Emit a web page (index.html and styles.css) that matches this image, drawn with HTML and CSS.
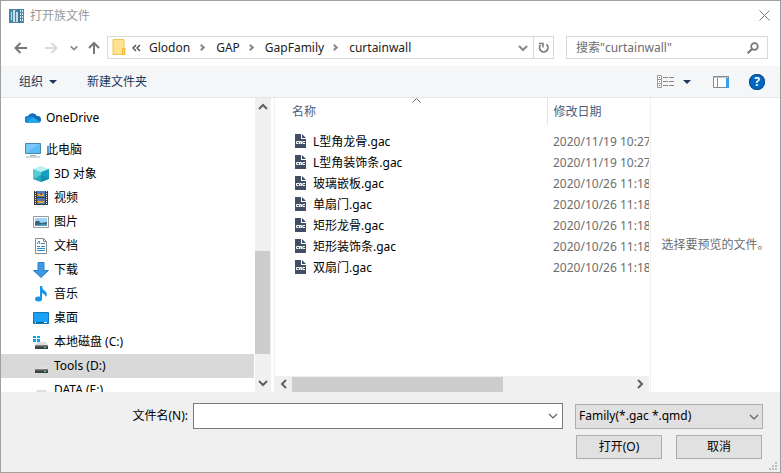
FILE: index.html
```html
<!DOCTYPE html>
<html lang="zh-CN">
<head>
    <meta charset="UTF-8" />
    <title>打开族文件</title>
    <meta name="viewport" content="width=device-width, initial-scale=1" />
    <link rel="stylesheet" href="styles.css">
</head>
<body>
    <!-- shared icons -->
    <svg class="sprite" aria-hidden="true">
        <symbol id="chev-down" viewBox="0 0 10 10"><path d="M1 3l4 4 4-4" fill="none" stroke="currentColor" stroke-width="2"/></symbol>
        <symbol id="chev-thin" viewBox="0 0 10 10"><path d="M1 3l4 4 4-4" fill="none" stroke="currentColor" stroke-width="1.2"/></symbol>
        <symbol id="drive" viewBox="0 0 16 16"><path d="M4 8h9l2 4H2z" fill="#dcdde1"/><path d="M2 11.500h13V15H2z" fill="#3d4043"/><path d="M2 11.500h13v1H2z" fill="#77797c"/><path d="M11 13h2v1h-2z" fill="#4be052"/></symbol>
        <symbol id="gac" viewBox="0 0 11 14">
            <path d="M0 0h6v5h5v9H0z" fill="#414e66"/>
            <path d="M7 0l4 4H7z" fill="#414e66"/>
            <path d="M4 7.500H1.500v2H3.500M4.500 10V7.500h2V10M4.500 9h2M10 7.500H7.800v2H10" fill="none" stroke="#fff" stroke-width="1"/>
        </symbol>
    </svg>

    <div class="dialog">
        <header class="titlebar">
            <svg width="15" height="14" viewBox="0 0 15 14">
                <path d="M0 0h15v14H0z" fill="#4888ab"/>
                <path d="M2 3h1v8H2zM4 1h2v12H4zM7 3h2v10H7z" fill="#c5dce7"/>
                <path d="M11.500 1v12M13.500 1v12" stroke="#d9ebf3" stroke-width="1" stroke-dasharray="2 1"/>
                <path d="M10 0v14" stroke="#286789"/>
            </svg>
            <h1>打开族文件</h1>
            <button class="close" aria-label="关闭"><svg width="11" height="11" viewBox="0 0 11 11"><path d="M.5.5l10 10M10.500.5l-10 10" stroke="#777" stroke-width="1"/></svg></button>
        </header>

        <nav class="navbar">
            <div class="nav-buttons">
                <button aria-label="后退"><svg width="14" height="12" viewBox="0 0 14 12"><path d="M13 6H2M6.500 1l-5 5 5 5" fill="none" stroke="#777" stroke-width="2"/></svg></button>
                <button aria-label="前进"><svg width="14" height="12" viewBox="0 0 14 12"><path d="M1 6h11M7.500 1l5 5-5 5" fill="none" stroke="#dadada" stroke-width="2"/></svg></button>
                <button aria-label="最近位置"><svg class="small"><use href="#chev-down"/></svg></button>
                <button aria-label="上移"><svg width="12" height="13" viewBox="0 0 12 13"><path d="M6 13V2M1 7l5-5 5 5" fill="none" stroke="#777" stroke-width="2"/></svg></button>
            </div>
            <div class="address">
                <svg width="14" height="17" viewBox="0 0 14 17"><path d="M1 .5h11v9h1v6H1z" fill="#ffe391" stroke="#edc64f"/><path d="M10.500 9.500h2v6h-2z" fill="#ffe391" stroke="#e8b932"/></svg>
                <svg class="earlier" width="10" height="8" viewBox="0 0 10 8"><path d="M4 1L1 4l3 3M8 1L5 4l3 3" fill="none" stroke="#444" stroke-width="1.300"/></svg>
                <ol class="crumbs">
                    <li><a href="#">Glodon</a></li>
                    <li><a href="#">GAP</a></li>
                    <li><a href="#">GapFamily</a></li>
                    <li><a href="#">curtainwall</a></li>
                </ol>
                <button class="history" aria-label="历史记录"><svg class="icon"><use href="#chev-down"/></svg></button>
                <button class="refresh" aria-label="刷新"><svg width="12" height="12" viewBox="0 0 12 12"><path d="M8.500 2.500A4.200 4.200 0 1 1 2.500 3" fill="none" stroke="#777" stroke-width="1.700"/><path d="M1 1.500h4v4" fill="none" stroke="#777" stroke-width="1.500"/></svg></button>
            </div>
            <div class="search">
                <input type="text" aria-label="搜索" placeholder="搜索&quot;curtainwall&quot;">
                <svg width="12" height="12" viewBox="0 0 12 12"><circle cx="7.500" cy="4.500" r="3.300" fill="none" stroke="#777" stroke-width="1.700"/><path d="M5 7l-4.300 4.300" stroke="#777" stroke-width="2"/></svg>
            </div>
        </nav>

        <div class="toolbar">
            <button>组织 <i class="caret"></i></button>
            <button>新建文件夹</button>
            <div class="tools">
                <button aria-label="更改视图">
                    <svg width="17" height="13" viewBox="0 0 17 13">
                        <path d="M.5.5h4v12h-4zM.5 4.500h4M.5 8.500h4" fill="#fff" stroke="#999"/>
                        <path d="M2 2h1v1H2z" fill="#2f9e50"/><path d="M2 6h1v1H2z" fill="#1987ff"/><path d="M2 10h1v1H2z" fill="#e02020"/>
                        <path d="M6 2.500h11M6 6.500h11M6 10.500h11" stroke="#888" stroke-dasharray="5 1"/>
                    </svg>
                    <i class="caret"></i>
                </button>
                <button aria-label="预览窗格"><svg width="16" height="12" viewBox="0 0 16 12"><path d="M.5.5h15v11H.5z" fill="#fff" stroke="#858b91"/><path d="M0 1h16M4.500 2v9" stroke="#858b91"/><path d="M13 2h3v10h-3z" fill="#37a0e8"/></svg></button>
                <button aria-label="帮助"><span class="help">?</span></button>
            </div>
        </div>

        <main class="content">
            <aside class="sidebar">
                <ul class="tree">
                    <li class="root">
                        <svg viewBox="0 0 16 16"><path d="M3 13a3.500 3.500 0 0 1 0-7 5 5 0 0 1 9 0 3.500 3.500 0 0 1 1 7z" fill="#0f6cbd"/><path d="M2 12l6-5 7 5-2 1H3z" fill="#28a8ea"/><path d="M1 8q3-3 7-1l-6 5q-3-1-1-4z" fill="#1490df"/></svg>
                        OneDrive
                    </li>
                    <li class="root spaced">
                        <svg viewBox="0 0 16 16"><path d="M.5 1.500h15v10H.5z" fill="#5cbcf5" stroke="#4589ae"/><path d="M1 11L14 2H1z" fill="#8bd4ff" opacity=".6"/><path d="M5 13.500h6M1 15h14" stroke="#9daebc"/></svg>
                        此电脑
                    </li>
                    <li><svg viewBox="0 0 16 16"><path d="M0 3l8-3 8 3-8 3z" fill="#baf1f3"/><path d="M0 3l8 3v10l-8-3z" fill="#55cbd5"/><path d="M16 3L8 6v10l8-3z" fill="#16a0c4"/><path d="M0 13l8-4 8 4-8 3z" fill="#087f98" opacity=".5"/></svg>3D 对象</li>
                    <li><svg viewBox="0 0 16 16"><path d="M1 1h14v14H1z" fill="#3b3b3b"/><path d="M4 1h8v6H4zM4 8h8v6H4z" fill="#477dc5"/><path d="M5 5h6M5 12h6" stroke="#e2a92e" stroke-width="2"/><path d="M7 3h2v2H7zM8 9h2v2H8z" fill="#b9433f"/><path d="M2.500 1v14M13.500 1v14" stroke="#eee" stroke-dasharray="1 1"/></svg>视频</li>
                    <li><svg viewBox="0 0 16 16"><path d="M.5 2.500h15v11H.5z" fill="#fff" stroke="#999"/><path d="M2 4h12v8H2z" fill="#9cd4f5"/><path d="M2 8q3-3 6 1l6-1v4H2z" fill="#37677c"/><path d="M2 11l12-1v2H2z" fill="#559bbd"/></svg>图片</li>
                    <li><svg viewBox="0 0 16 16"><path d="M2.500.5h8l3 3v12h-11z" fill="#fff" stroke="#8b8b8b"/><path d="M10.500.5v3h3" fill="none" stroke="#8b8b8b"/><path d="M4 6l2-3 1 3M8 5.500h4M4 8.500h3M8 8.500h4M4 10.500h8M4 12.500h8" fill="none" stroke="#2f8dcb"/></svg>文档</li>
                    <li><svg viewBox="0 0 16 16"><path d="M5 .5h6v8h4.500L8 15.500.5 8.500H5z" fill="#3e98e4" stroke="#2980ca"/></svg>下载</li>
                    <li><svg viewBox="0 0 16 16"><ellipse cx="5.500" cy="13" rx="3.500" ry="2.500" fill="#1794ea"/><path d="M7 0h2q0 3 3 5 3 2 1 6-1-3-4-4v6H7z" fill="#1794ea"/></svg>音乐</li>
                    <li><svg viewBox="0 0 16 16"><path d="M.5 2.500h15v11H.5z" fill="#19a0f8" stroke="#1677b6"/><path d="M1 12.500h14" stroke="#075e99"/><path d="M2 12.500h1M11 12.500h3" stroke="#fff"/></svg>桌面</li>
                    <li><svg viewBox="0 0 16 16"><use href="#drive"/><path d="M0 2h3v2H0zM4 2h3v2H4zM0 5h3v3H0zM4 5h3v3H4z" fill="#00a9ef"/></svg>本地磁盘 (C:)</li>
                    <li class="selected"><svg><use href="#drive"/></svg>Tools (D:)</li>
                    <li><svg><use href="#drive"/></svg>DATA (E:)</li>
                </ul>
                <div class="scroll-y">
                    <svg class="icon up"><use href="#chev-down"/></svg>
                    <div class="track"><div class="thumb"></div></div>
                    <svg class="icon"><use href="#chev-down"/></svg>
                </div>
            </aside>

            <section class="files">
                <svg class="sort" width="9" height="5" viewBox="0 0 9 5"><path d="M.5 4.500l4-4 4 4" fill="none" stroke="#666"/></svg>
                <div class="list">
                    <table>
                        <thead>
                            <tr><th class="name">名称</th><th class="date">修改日期</th></tr>
                        </thead>
                        <tbody>
                            <tr><td><svg><use href="#gac"/></svg>L型角龙骨.gac</td><td>2020/11/19 10:27</td></tr>
                            <tr><td><svg><use href="#gac"/></svg>L型角装饰条.gac</td><td>2020/11/19 10:27</td></tr>
                            <tr><td><svg><use href="#gac"/></svg>玻璃嵌板.gac</td><td>2020/10/26 11:18</td></tr>
                            <tr><td><svg><use href="#gac"/></svg>单扇门.gac</td><td>2020/10/26 11:18</td></tr>
                            <tr><td><svg><use href="#gac"/></svg>矩形龙骨.gac</td><td>2020/10/26 11:18</td></tr>
                            <tr><td><svg><use href="#gac"/></svg>矩形装饰条.gac</td><td>2020/10/26 11:18</td></tr>
                            <tr><td><svg><use href="#gac"/></svg>双扇门.gac</td><td>2020/10/26 11:18</td></tr>
                        </tbody>
                    </table>
                </div>
                <div class="scroll-x">
                    <svg class="icon left"><use href="#chev-down"/></svg>
                    <div class="track"><div class="thumb"></div></div>
                    <svg class="icon right"><use href="#chev-down"/></svg>
                </div>
            </section>

            <section class="preview">选择要预览的文件。</section>
        </main>

        <footer class="footer">
            <div class="fields">
                <label for="filename">文件名(N):</label>
                <div class="combo">
                    <input type="text" id="filename">
                    <svg class="icon"><use href="#chev-thin"/></svg>
                </div>
                <div class="filter">
                    <select aria-label="文件类型"><option>Family(*.gac *.qmd)</option></select>
                    <svg class="icon"><use href="#chev-thin"/></svg>
                </div>
            </div>
            <div class="actions">
                <button>打开(O)</button>
                <button>取消</button>
            </div>
            <svg class="grip" width="8" height="8" viewBox="0 0 8 8"><path d="M6 0h2v2H6zM3 3h2v2H3zM6 3h2v2H6zM0 6h2v2H0zM3 6h2v2H3zM6 6h2v2H6z" fill="#bfbfbf"/></svg>
        </footer>
    </div>
</body>
</html>
```
FILE: styles.css
```css
* {
    box-sizing: border-box;
}
body {
    margin: 0;
    font-family: "Noto Sans", "Noto Sans CJK SC", sans-serif;
    font-size: 12px;
    line-height: 16px;
    color: #000;
}
button, input, select {
    font: inherit;
    color: inherit;
}
button {
    display: flex;
    align-items: center;
    justify-content: center;
    padding: 0;
    border: none;
    background: none;
}
svg {
    display: block;
    flex: none;
}
ul, ol {
    list-style: none;
    margin: 0;
    padding: 0;
}
.sprite {
    position: absolute;
    width: 0;
    height: 0;
}
.icon {
    width: 10px;
    height: 10px;
    color: #606060;
}
.small {
    width: 8px;
    height: 8px;
    color: #888;
}
.dialog {
    display: flex;
    flex-direction: column;
    height: 100vh;
    min-height: 360px;
    border: 1px solid #a0a0a0;
    background: #fff;
}

/* title bar */
.titlebar {
    display: flex;
    align-items: center;
    height: 29px;
    padding: 0 10px 0 8px;
    gap: 6px;
}
.titlebar h1 {
    margin: 0;
    font-size: 12px;
    font-weight: normal;
    color: #999;
}
.close {
    margin-left: auto;
}

/* navigation */
.navbar {
    display: flex;
    height: 36px;
    padding: 6px 12px 7px 13px;
}
.nav-buttons {
    display: flex;
    align-items: center;
    width: 93px;
}
.nav-buttons button {
    margin-right: 16px;
}
.nav-buttons button:nth-child(2) {
    margin-right: 12px;
}
.nav-buttons button:nth-child(3) {
    margin-right: 10px;
}
.nav-buttons button:last-child {
    margin-right: 0;
}
.address {
    display: flex;
    flex: 1;
    align-items: center;
    border: 1px solid #d9d9d9;
    padding-left: 4px;
}
.earlier {
    margin: 0 6px;
}
.crumbs {
    display: flex;
    flex: 1;
    padding-left: 1px;
}
.crumbs a {
    color: #222;
    text-decoration: none;
}
.crumbs li + li::before {
    content: "";
    display: inline-block;
    width: 3px;
    height: 3px;
    margin: 0 12px 2px 9px;
    border-top: 2px solid #888;
    border-right: 2px solid #888;
    box-sizing: content-box;
    transform: rotate(45deg);
}
.crumbs li + li {
    margin-right: -1px;
}
.history {
    width: 20px;
}
.history .icon {
    color: #888;
}
.refresh {
    align-self: stretch;
    width: 20px;
    border-left: 1px solid #d9d9d9;
}
.search {
    display: flex;
    align-items: center;
    width: 202px;
    margin-left: 12px;
    padding: 0 8px 0 9px;
    border: 1px solid #d9d9d9;
}
.search input {
    flex: 1;
    min-width: 0;
    padding: 0;
    border: none;
    outline: none;
}
.search input::placeholder {
    color: #6d6d6d;
}

/* command bar */
.toolbar {
    display: flex;
    align-items: center;
    height: 32px;
    padding: 0 15px 0 18px;
    gap: 30px;
    background: #f5f6f7;
    border-bottom: 1px solid #e4e7ea;
    color: #1e395b;
}
.caret {
    margin-left: 6px;
    border: 4px solid transparent;
    border-top-color: #1e395b;
    border-bottom: none;
}
.tools {
    display: flex;
    align-items: center;
    margin-left: auto;
    gap: 20px;
}
.tools .caret {
    margin: 0 2px 0 9px;
}
.help {
    width: 16px;
    height: 16px;
    border-radius: 50%;
    background: #0067c5;
    box-shadow: inset 0 0 0 1px #154c88;
    color: #fff;
    font-weight: bold;
}

/* main area */
.content {
    display: flex;
    flex: 1;
    min-height: 0;
}
.sidebar {
    display: flex;
    flex: none;
    width: 274px;
    padding-right: 3px;
    border-right: 1px solid #f0f0f0;
}
.tree {
    flex: 1;
    padding-top: 8px;
    margin-right: 1px;
    overflow: hidden;
}
.tree li {
    display: flex;
    align-items: center;
    height: 24px;
    padding-left: 32px;
    gap: 5px;
}
.tree li.root {
    padding-left: 24px;
}
.tree li.spaced {
    margin-top: 8px;
}
.tree li.selected {
    background: #d9d9d9;
}
.tree svg {
    width: 16px;
    height: 16px;
}
.scroll-y {
    display: flex;
    flex-direction: column;
    align-items: center;
    width: 16px;
    padding: 4px 0;
    background: #f0f0f0;
}
.scroll-y .track {
    display: flex;
    flex: 1;
    flex-direction: column;
    justify-content: flex-end;
    width: 100%;
    padding: 3px 1px 24px 0;
}
.scroll-y .thumb {
    height: 43%;
    background: #cdcdcd;
}
.up {
    transform: rotate(180deg);
}
.left {
    transform: rotate(90deg);
}
.right {
    transform: rotate(-90deg);
}
.files {
    position: relative;
    display: flex;
    flex: 1;
    flex-direction: column;
    min-width: 0;
    margin-right: 1px;
}
/* sits on the edge of the header row */
.sort {
    position: absolute;
    top: 0;
    left: 137px;
}
.list {
    flex: 1;
    min-height: 0;
    overflow: hidden;
}
table {
    width: 460px;
    table-layout: fixed;
    border-collapse: collapse;
}
th {
    height: 27px;
    padding: 0 0 0 6px;
    border-right: 1px solid #e5e5e5;
    color: #4c607a;
    font-weight: normal;
    text-align: left;
}
th.name {
    width: 272px;
    padding-left: 17px;
}
/* space between header and rows */
tbody::before {
    content: "";
    display: block;
    height: 6px;
}
td {
    height: 21px;
    padding: 0 0 0 6px;
    color: #6d6d6d;
    white-space: nowrap;
}
td:first-child {
    padding-left: 20px;
    color: #000;
}
td svg {
    display: inline-block;
    width: 11px;
    height: 14px;
    margin-right: 7px;
    vertical-align: -2px;
}
.scroll-x {
    display: flex;
    align-items: center;
    height: 16px;
    padding: 0 4px;
    background: #f0f0f0;
}
.scroll-x .track {
    flex: 1;
    height: 15px;
    padding: 0 3px;
}
.scroll-x .thumb {
    width: 62%;
    height: 100%;
    background: #cdcdcd;
}
.preview {
    display: flex;
    align-items: center;
    justify-content: center;
    width: 130px;
    border-left: 1px solid #f0f0f0;
    color: #6d6d6d;
}

/* file name and buttons */
.footer {
    position: relative;
    height: 80px;
    padding: 11px 17px 0 0;
    background: #f0f0f0;
}
.fields {
    display: flex;
    align-items: center;
}
.fields label {
    width: 192px;
    padding-right: 5px;
    text-align: right;
}
.combo {
    display: flex;
    flex: 1;
    align-items: center;
    height: 26px;
    padding-right: 4px;
    border: 1px solid #7a7a7a;
    background: #fff;
}
.combo input {
    flex: 1;
    min-width: 0;
    border: none;
    outline: none;
    background: none;
}
.filter {
    position: relative;
    width: 188px;
    margin-left: 12px;
}
.filter select {
    display: block;
    width: 100%;
    height: 25px;
    padding: 0 20px 0 3px;
    appearance: none;
    border: 1px solid #adadad;
    border-radius: 0;
    background: #e1e1e1;
}
.filter .icon {
    position: absolute;
    top: 8px;
    right: 4px;
    pointer-events: none;
}
.actions {
    display: flex;
    justify-content: flex-end;
    gap: 14px;
    padding: 6px 1px 0 0;
}
.actions button {
    width: 86px;
    height: 24px;
    border: 1px solid #adadad;
    background: #e1e1e1;
}
.grip {
    position: absolute;
    right: 3px;
    bottom: 2px;
}
```
